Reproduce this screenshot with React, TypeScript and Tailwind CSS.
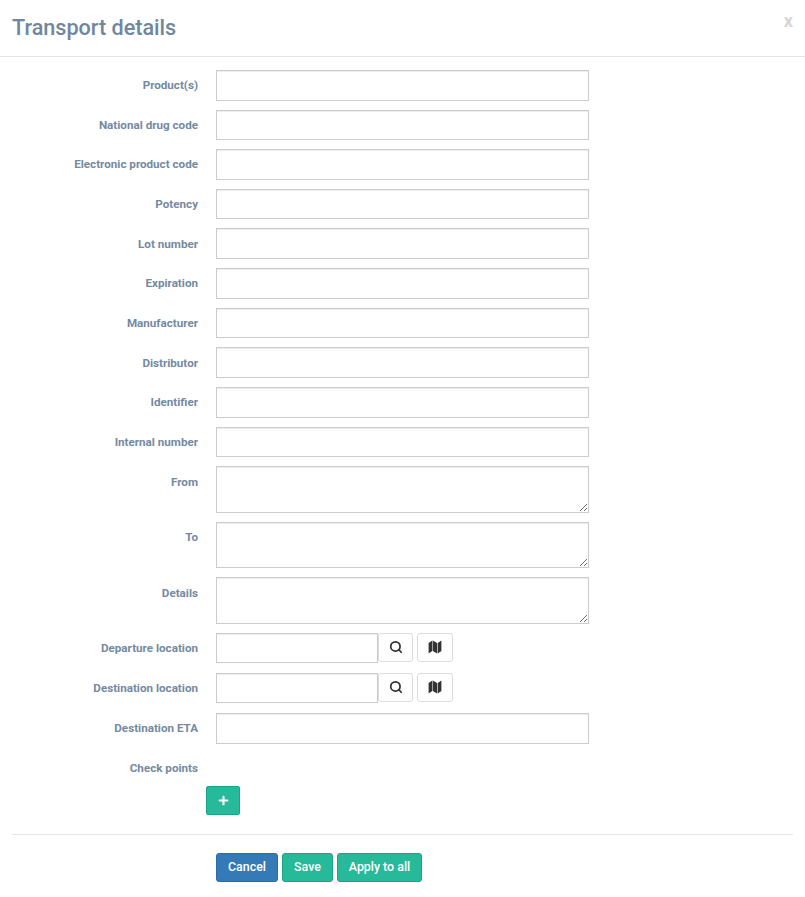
import React from 'react';
import { FaPlus } from 'react-icons/fa';
import { Search } from 'lucide-react';

const textRows = [
  'Product(s)',
  'National drug code',
  'Electronic product code',
  'Potency',
  'Lot number',
  'Expiration',
  'Manufacturer',
  'Distributor',
  'Identifier',
  'Internal number',
];

const areaRows = ['From', 'To', 'Details'];
const locationRows = ['Departure location', 'Destination location'];

const inputClass =
  'block h-[30.65px] border border-[#cccccc] bg-white shadow-[inset_0_1px_1px_rgba(0,0,0,0.075)] outline-none';

function Row({ label, className, children }: { label: string; className?: string; children?: React.ReactNode }) {
  return (
    <div className={`flex items-start ${className ?? 'mb-[9px]'}`}>
      <label className="w-[198px] shrink-0 pt-[7.3px] text-right text-[11.65px] leading-[17px] font-bold text-[#748aa1]">
        {label}
      </label>
      <div className="ml-[18px] flex items-start">{children}</div>
    </div>
  );
}

function IconButton({ children, className }: { children: React.ReactNode; className: string }) {
  return (
    <button
      type="button"
      className={`flex h-[29px] items-center justify-center rounded-[3px] border border-[#dddddd] bg-white text-[#333333] ${className}`}
    >
      {children}
    </button>
  );
}

function MapIcon() {
  return (
    <svg width="14" height="14" viewBox="0 0 14 14" fill="#333333">
      <path d="M0.6 3 L4.3 0.6 V10.9 L0.6 13.4 Z" />
      <path d="M4.8 0.6 L9.1 3 V13.4 L4.8 10.9 Z" />
      <path d="M9.7 3 L13.4 0.6 V10.9 L9.7 13.4 Z" />
    </svg>
  );
}

export default function App() {
  return (
    <div className="min-h-[897px] bg-white font-['Roboto',sans-serif]">
      {/* Header */}
      <div className="flex h-[57px] items-start justify-between border-b border-[#e5e5e5] pl-3 pr-3">
        <h4 className="pt-[14px] text-[21.6px] leading-[28px] font-medium text-[#70869d]">Transport details</h4>
        <span className="pt-[10px] text-[18px] leading-[22px] font-bold text-[#d6d6d6]">x</span>
      </div>

      {/* Form */}
      <form className="pt-[12.9px]">
        {textRows.map((label) => (
          <Row key={label} label={label}>
            <input type="text" className={`${inputClass} w-[373px]`} />
          </Row>
        ))}
        {areaRows.map((label) => (
          <Row key={label} label={label}>
            <textarea className="block h-[46.5px] w-[373px] border border-[#cccccc] bg-white shadow-[inset_0_1px_1px_rgba(0,0,0,0.075)] outline-none" />
          </Row>
        ))}
        {locationRows.map((label) => (
          <Row key={label} label={label} className="mb-[9.4px]">
            <input type="text" className={`${inputClass} w-[162px]`} />
            <IconButton className="w-[35px]">
              <Search size={14} strokeWidth={3} />
            </IconButton>
            <IconButton className="ml-[4px] w-[36px]">
              <MapIcon />
            </IconButton>
          </Row>
        ))}
        <Row label="Destination ETA">
          <input type="text" className={`${inputClass} w-[373px]`} />
        </Row>
        <Row label="Check points" />

        <div className="ml-[206px]">
          <button
            type="button"
            className="flex h-[29px] w-[34px] items-center justify-center rounded-[2px] border border-[#1aa58a] bg-[#26b99a] text-[11px] text-white"
          >
            <FaPlus />
          </button>
        </div>

        {/* Footer */}
        <div className="mx-3 mt-[19px] border-t border-[#e5e5e5] pt-[18px]">
          <div className="ml-[204px] flex gap-[4px] text-[12.4px] font-medium text-white">
            <button type="button" className="h-[29px] w-[62px] rounded-[3px] border border-[#2e6da4] bg-[#337ab7] pt-px">
              Cancel
            </button>
            <button type="button" className="h-[29px] w-[51px] rounded-[3px] border border-[#1aa58a] bg-[#26b99a] pt-px">
              Save
            </button>
            <button type="button" className="h-[29px] w-[85px] rounded-[3px] border border-[#1aa58a] bg-[#26b99a] pt-px">
              Apply to all
            </button>
          </div>
        </div>
      </form>
    </div>
  );
}
